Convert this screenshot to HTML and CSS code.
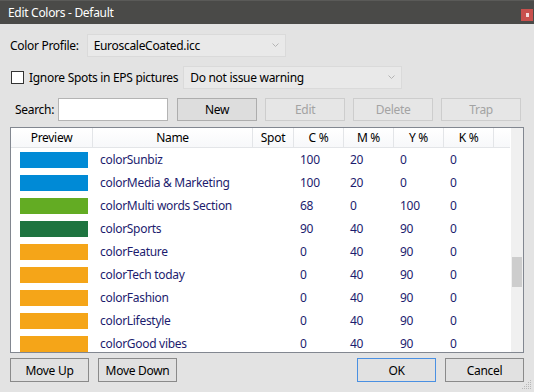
FILE: index.html
```html
<!DOCTYPE html>
<html lang="en">
<head>
    <meta charset="UTF-8">
    <title>Edit Colors - Default</title>
    <link rel="stylesheet" href="styles.css">
</head>
<body>
    <div class="dialog">
        <div class="titlebar">
            <span class="title">Edit Colors - Default</span>
            <span class="close"><span class="close-dot"></span></span>
        </div>

        <div class="content">
            <div class="row row-profile">
                <label class="lbl">Color Profile:</label>
                <div class="combo combo-profile">
                    <span>EuroscaleCoated.icc</span>
                    <svg class="chev" width="7" height="5" viewBox="0 0 7 5"><polyline points="0.5,0.5 3.5,3.5 6.5,0.5" fill="none" stroke="#b4b4b4" stroke-width="1"/></svg>
                </div>
            </div>

            <div class="row row-spots">
                <span class="check"></span>
                <label class="lbl lbl-check">Ignore Spots in EPS pictures</label>
                <div class="combo combo-warn">
                    <span>Do not issue warning</span>
                    <svg class="chev" width="7" height="5" viewBox="0 0 7 5"><polyline points="0.5,0.5 3.5,3.5 6.5,0.5" fill="none" stroke="#b4b4b4" stroke-width="1"/></svg>
                </div>
            </div>

            <div class="row row-search">
                <label class="lbl lbl-search">Search:</label>
                <input class="search" type="text">
                <button class="btn btn-new">New</button>
                <button class="btn" disabled>Edit</button>
                <button class="btn" disabled>Delete</button>
                <button class="btn" disabled>Trap</button>
            </div>

            <!-- Lista de colores -->
            <div class="grid-frame">
                <div class="grid">
                    <div class="grid-head">
                        <div class="cell c-prev">Preview</div>
                        <div class="cell c-name">Name</div>
                        <div class="cell c-spot">Spot</div>
                        <div class="cell c-num">C %</div>
                        <div class="cell c-num">M %</div>
                        <div class="cell c-num">Y %</div>
                        <div class="cell c-num">K %</div>
                        <div class="cell c-fill"></div>
                    </div>

                    <div class="grid-row">
                        <div class="cell c-prev"><span class="swatch sw-blue"></span></div>
                        <div class="cell c-name">colorSunbiz</div>
                        <div class="cell c-spot"></div>
                        <div class="cell c-num">100</div>
                        <div class="cell c-num">20</div>
                        <div class="cell c-num">0</div>
                        <div class="cell c-num">0</div>
                    </div>
                    <div class="grid-row">
                        <div class="cell c-prev"><span class="swatch sw-blue"></span></div>
                        <div class="cell c-name">colorMedia &amp; Marketing</div>
                        <div class="cell c-spot"></div>
                        <div class="cell c-num">100</div>
                        <div class="cell c-num">20</div>
                        <div class="cell c-num">0</div>
                        <div class="cell c-num">0</div>
                    </div>
                    <div class="grid-row">
                        <div class="cell c-prev"><span class="swatch sw-lime"></span></div>
                        <div class="cell c-name">colorMulti words Section</div>
                        <div class="cell c-spot"></div>
                        <div class="cell c-num">68</div>
                        <div class="cell c-num">0</div>
                        <div class="cell c-num">100</div>
                        <div class="cell c-num">0</div>
                    </div>
                    <div class="grid-row">
                        <div class="cell c-prev"><span class="swatch sw-green"></span></div>
                        <div class="cell c-name">colorSports</div>
                        <div class="cell c-spot"></div>
                        <div class="cell c-num">90</div>
                        <div class="cell c-num">40</div>
                        <div class="cell c-num">90</div>
                        <div class="cell c-num">0</div>
                    </div>
                    <div class="grid-row">
                        <div class="cell c-prev"><span class="swatch sw-orange"></span></div>
                        <div class="cell c-name">colorFeature</div>
                        <div class="cell c-spot"></div>
                        <div class="cell c-num">0</div>
                        <div class="cell c-num">40</div>
                        <div class="cell c-num">90</div>
                        <div class="cell c-num">0</div>
                    </div>
                    <div class="grid-row">
                        <div class="cell c-prev"><span class="swatch sw-orange"></span></div>
                        <div class="cell c-name">colorTech today</div>
                        <div class="cell c-spot"></div>
                        <div class="cell c-num">0</div>
                        <div class="cell c-num">40</div>
                        <div class="cell c-num">90</div>
                        <div class="cell c-num">0</div>
                    </div>
                    <div class="grid-row">
                        <div class="cell c-prev"><span class="swatch sw-orange"></span></div>
                        <div class="cell c-name">colorFashion</div>
                        <div class="cell c-spot"></div>
                        <div class="cell c-num">0</div>
                        <div class="cell c-num">40</div>
                        <div class="cell c-num">90</div>
                        <div class="cell c-num">0</div>
                    </div>
                    <div class="grid-row">
                        <div class="cell c-prev"><span class="swatch sw-orange"></span></div>
                        <div class="cell c-name">colorLifestyle</div>
                        <div class="cell c-spot"></div>
                        <div class="cell c-num">0</div>
                        <div class="cell c-num">40</div>
                        <div class="cell c-num">90</div>
                        <div class="cell c-num">0</div>
                    </div>
                    <div class="grid-row">
                        <div class="cell c-prev"><span class="swatch sw-orange"></span></div>
                        <div class="cell c-name">colorGood vibes</div>
                        <div class="cell c-spot"></div>
                        <div class="cell c-num">0</div>
                        <div class="cell c-num">40</div>
                        <div class="cell c-num">90</div>
                        <div class="cell c-num">0</div>
                    </div>
                </div>
                <div class="scrollbar">
                    <div class="thumb"></div>
                </div>
            </div>

            <div class="row row-bottom">
                <button class="btn btn-dark">Move Up</button>
                <button class="btn btn-dark">Move Down</button>
                <span class="spacer"></span>
                <button class="btn btn-dark btn-ok">OK</button>
                <button class="btn btn-dark">Cancel</button>
            </div>
        </div>

        <svg class="grip" width="10" height="10" viewBox="0 0 10 10">
            <rect x="8" y="0" width="1" height="1" fill="#b8b8b8"/>
            <rect x="6" y="2" width="1" height="1" fill="#b8b8b8"/>
            <rect x="8" y="2" width="1" height="1" fill="#b8b8b8"/>
            <rect x="4" y="4" width="1" height="1" fill="#b8b8b8"/>
            <rect x="6" y="4" width="1" height="1" fill="#b8b8b8"/>
            <rect x="8" y="4" width="1" height="1" fill="#b8b8b8"/>
            <rect x="2" y="6" width="1" height="1" fill="#b8b8b8"/>
            <rect x="4" y="6" width="1" height="1" fill="#b8b8b8"/>
            <rect x="6" y="6" width="1" height="1" fill="#b8b8b8"/>
            <rect x="8" y="6" width="1" height="1" fill="#b8b8b8"/>
            <rect x="0" y="8" width="1" height="1" fill="#b8b8b8"/>
            <rect x="2" y="8" width="1" height="1" fill="#b8b8b8"/>
            <rect x="4" y="8" width="1" height="1" fill="#b8b8b8"/>
            <rect x="6" y="8" width="1" height="1" fill="#b8b8b8"/>
            <rect x="8" y="8" width="1" height="1" fill="#b8b8b8"/>
        </svg>
    </div>
</body>
</html>
```

FILE: styles.css
```css
/* General */
* {
    box-sizing: border-box;
}

body {
    margin: 0;
    padding: 0;
    font-family: "Noto Sans", "Open Sans", sans-serif;
    font-size: 12px;
    letter-spacing: -0.3px;
    color: #000;
    background-color: #e3e3e3;
}

.dialog {
    position: relative;
    width: 534px;
    height: 392px;
    background-color: #e3e3e3;
    overflow: hidden;
}

/* Title bar */
.titlebar {
    height: 24px;
    background-color: #4a4a48;
    border-top: 1px solid #5a5a58;
    display: flex;
    align-items: center;
    padding: 0 1px 0 8px;
}

.title {
    color: #ffffff;
    flex: 1;
    line-height: 1;
}

.close {
    width: 12px;
    height: 12px;
    background-color: #c9504d;
    display: flex;
    align-items: center;
    justify-content: center;
    margin-top: 4px;
}

.close-dot {
    width: 3px;
    height: 4px;
    background-color: #f5dcdc;
}

/* Content */
.content {
    padding: 10px 10px 0 10px;
    display: flex;
    flex-direction: column;
}

.row {
    display: flex;
    align-items: center;
}

.row-profile {
    height: 23px;
}

.row-spots {
    height: 23px;
    margin-top: 9px;
}

.row-search {
    height: 23px;
    margin-top: 9px;
}

.lbl {
    white-space: nowrap;
}

.combo {
    height: 23px;
    background-color: #e9e9e9;
    border: 1px solid #dadada;
    display: flex;
    align-items: center;
    justify-content: space-between;
    padding: 0 6px 0 6px;
}

.combo-profile {
    width: 199px;
    margin-left: 8px;
}

.combo-warn {
    width: 219px;
    margin-left: 5px;
}

.check {
    width: 13px;
    height: 13px;
    border: 1px solid #333;
    background: #fff;
    margin-left: 1px;
}

.lbl-check {
    margin-left: 5px;
}

.lbl-search {
    margin-left: 5px;
}

.search {
    width: 110px;
    height: 23px;
    margin: 0 0 0 4px;
    border: 1px solid #b4b4b4;
    background: #fff;
    padding: 0 4px;
    font: inherit;
}

/* Buttons */
.btn {
    font: inherit;
    letter-spacing: inherit;
    height: 23px;
    width: 80px;
    padding: 0;
    background-color: #e6e6e6;
    border: 1px solid #cdcdcd;
    color: #a3a3a3;
    margin-left: 8px;
}

.btn-new {
    margin-left: 9px;
    color: #000;
    background-color: #dddddd;
    border-color: #adadad;
}

.btn-dark {
    height: 24px;
    width: 79px;
    color: #000;
    background-color: #e1e1e1;
    border-color: #8a8a8a;
    margin-left: 9px;
}

.btn-dark:first-child {
    margin-left: 0;
}

.btn-ok {
    border-color: #4a90e2;
}

.spacer {
    flex: 1;
}

/* Color list */
.grid-frame {
    margin-top: 6px;
    height: 226px;
    border: 1px solid #828790;
    background: #fff;
    display: flex;
    overflow: hidden;
}

.grid {
    width: 500px;
    display: flex;
    flex-direction: column;
}

.grid-head {
    display: flex;
    height: 20px;
    flex-shrink: 0;
    background: linear-gradient(#ffffff, #f7f8fa);
    border-bottom: 1px solid #e3e5e8;
}

.grid-head .cell {
    justify-content: center;
    border-right: 1px solid #e3e5e8;
    color: #000;
}

.grid-head .c-fill {
    flex: 1;
    border-right: none;
}

.grid-row {
    display: flex;
    height: 23px;
    flex-shrink: 0;
}

.cell {
    display: flex;
    align-items: center;
    white-space: nowrap;
    color: #1c1c6e;
}

.c-prev {
    width: 82px;
    padding-left: 9px;
}

.grid-head .c-prev {
    padding-left: 0;
}

.c-name {
    width: 160px;
    padding-left: 7px;
}

.grid-head .c-name {
    padding-left: 0;
}

.c-spot {
    width: 41px;
}

.c-num {
    width: 50px;
    padding-left: 6px;
}

.grid-head .c-num {
    padding-left: 0;
}

.swatch {
    width: 68px;
    height: 16px;
}

.sw-blue {
    background-color: #008ad6;
}

.sw-lime {
    background-color: #63ac23;
}

.sw-green {
    background-color: #1e7440;
}

.sw-orange {
    background-color: #f5a518;
}

/* Scrollbar */
.scrollbar {
    width: 12px;
    margin-left: 1px;
    background-color: #f0f0f0;
}

.thumb {
    width: 10px;
    height: 30px;
    margin: 129px 0 0 1px;
    background-color: #cdcdcd;
}

.row-bottom {
    margin-top: 5px;
}

.grip {
    position: absolute;
    right: 2px;
    bottom: 2px;
}
```
